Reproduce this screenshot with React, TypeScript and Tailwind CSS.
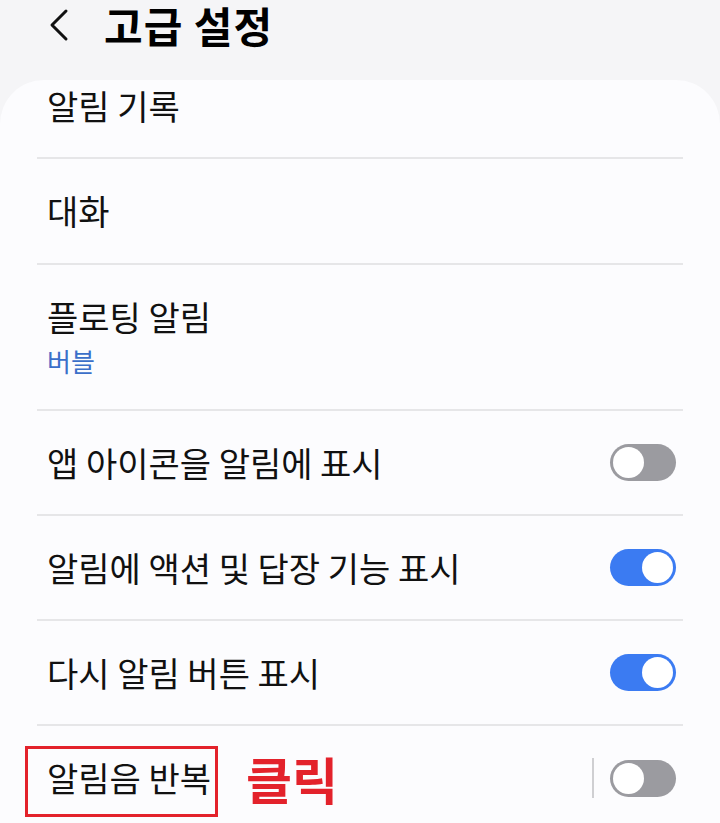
import React from "react";

const font = { fontFamily: '"Noto Sans CJK KR", "Noto Sans", sans-serif' };

function Toggle({ on }: { on: boolean }) {
  return (
    <div
      className={`w-[66px] h-[37px] rounded-full p-[3px] flex ${
        on ? "bg-[#3b7bf2] justify-end" : "bg-[#9b9ba0] justify-start"
      }`}
    >
      <div className="w-[31px] h-[31px] rounded-full bg-white" />
    </div>
  );
}

function Divider() {
  return <div className="mx-[37px] h-[2px] bg-[#e6e6e8]" />;
}

const toggleRows = [
  { title: "앱 아이콘을 알림에 표시", on: false },
  { title: "알림에 액션 및 답장 기능 표시", on: true },
  { title: "다시 알림 버튼 표시", on: true },
];

export default function App() {
  return (
    <div className="w-[720px] h-[823px] overflow-hidden bg-[#f5f5f7] text-[#111]" style={font}>
      {/* Header */}
      <div className="h-[80px] flex items-start pl-[46px] pt-[1px]">
        <div className="flex items-center gap-[28px]">
          <svg width="30" height="34" viewBox="0 0 30 34" fill="none">
            <path d="M20 3 L6 17 L20 31" stroke="#111" strokeWidth="3" strokeLinecap="round" strokeLinejoin="round" />
          </svg>
          <h1 className="text-[42px] font-bold leading-[48px] tracking-[1px] text-black">고급 설정</h1>
        </div>
      </div>

      {/* Card */}
      <div className="bg-[#fcfcfe] rounded-t-[44px] h-full">
        <div className="h-[77px] pl-[47px] pt-[4px] text-[34px] leading-[44px]">알림 기록</div>
        <Divider />
        <div className="h-[104px] pl-[47px] flex items-center text-[34px] leading-[44px]">대화</div>
        <Divider />
        <div className="h-[144px] pl-[47px] flex flex-col justify-center">
          <div className="text-[34px] leading-[44px]">플로팅 알림</div>
          <div className="text-[26px] leading-[36px] text-[#3b6fc9] mt-[4px]">버블</div>
        </div>
        {toggleRows.map((r) => (
          <React.Fragment key={r.title}>
            <Divider />
            <div className="h-[103px] pl-[47px] pr-[44px] flex items-center justify-between">
              <span className="text-[34px] leading-[44px]">{r.title}</span>
              <Toggle on={r.on} />
            </div>
          </React.Fragment>
        ))}
        <Divider />
        <div className="h-[104px] pl-[47px] pr-[44px] flex items-center">
          <div className="relative">
            <span className="text-[34px] leading-[44px]">알림음 반복</span>
            <div className="absolute -left-[22px] -right-[7px] -top-[10px] -bottom-[17px] border-[3px] border-[#e3222b]" />
          </div>
          <span className="ml-[35px] text-[50px] font-bold text-[#e3222b] leading-none">클릭</span>
          <div className="ml-auto w-[2px] h-[40px] bg-[#cfcfd2]" />
          <div className="ml-[16px]">
            <Toggle on={false} />
          </div>
        </div>
      </div>
    </div>
  );
}
